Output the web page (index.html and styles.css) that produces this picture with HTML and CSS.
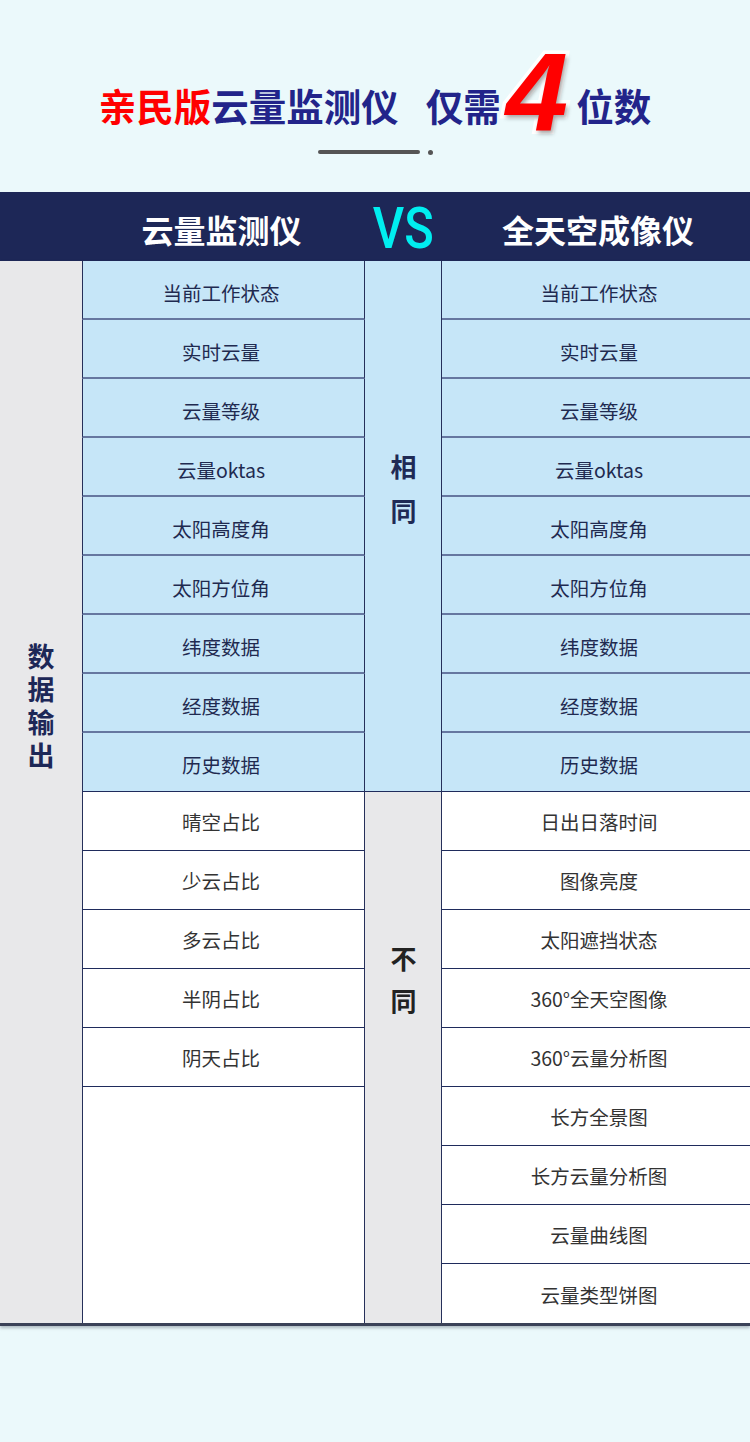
FILE: index.html
```html
<!DOCTYPE html>
<html lang="zh-CN">
<head>
<meta charset="utf-8">
<title>云量监测仪 VS 全天空成像仪</title>
<link rel="stylesheet" href="styles.css">
</head>
<body>
<div class="page">
  <div class="title">
    <span class="red">亲民版</span><span class="navy">云量监测仪</span><span class="navy gap">仅需</span><span class="four">4</span><span class="navy">位数</span>
  </div>
  <div class="sep"><span class="bar"></span><span class="dot"></span></div>

  <div class="head">
    <div></div>
    <div class="h-name">云量监测仪</div>
    <div class="vs"><span>VS</span></div>
    <div class="h-name">全天空成像仪</div>
  </div>

  <div class="table">
    <div class="side"><span class="vtext">数据输出</span></div>

    <div class="c2 blue">当前工作状态</div>
    <div class="c2 blue">实时云量</div>
    <div class="c2 blue">云量等级</div>
    <div class="c2 blue">云量oktas</div>
    <div class="c2 blue">太阳高度角</div>
    <div class="c2 blue">太阳方位角</div>
    <div class="c2 blue">纬度数据</div>
    <div class="c2 blue">经度数据</div>
    <div class="c2 blue last">历史数据</div>
    <div class="c2 white">晴空占比</div>
    <div class="c2 white">少云占比</div>
    <div class="c2 white">多云占比</div>
    <div class="c2 white">半阴占比</div>
    <div class="c2 white">阴天占比</div>
    <div class="c2 white empty"></div>

    <div class="c3 same"><span class="vtext">相同</span></div>
    <div class="c3 diff"><span class="vtext">不同</span></div>

    <div class="c4 blue">当前工作状态</div>
    <div class="c4 blue">实时云量</div>
    <div class="c4 blue">云量等级</div>
    <div class="c4 blue">云量oktas</div>
    <div class="c4 blue">太阳高度角</div>
    <div class="c4 blue">太阳方位角</div>
    <div class="c4 blue">纬度数据</div>
    <div class="c4 blue">经度数据</div>
    <div class="c4 blue last">历史数据</div>
    <div class="c4 white">日出日落时间</div>
    <div class="c4 white">图像亮度</div>
    <div class="c4 white">太阳遮挡状态</div>
    <div class="c4 white">360°全天空图像</div>
    <div class="c4 white">360°云量分析图</div>
    <div class="c4 white">长方全景图</div>
    <div class="c4 white">长方云量分析图</div>
    <div class="c4 white">云量曲线图</div>
    <div class="c4 white">云量类型饼图</div>
  </div>
</div>
</body>
</html>
```

FILE: styles.css
```css
html, body {
  margin: 0;
  padding: 0;
}
body {
  background: #ebf9fb;
  font-family: "Noto Sans CJK SC", "Noto Sans", sans-serif;
  width: 750px;
  height: 1442px;
  overflow: hidden;
}
.page {
  width: 750px;
}

/* Title */
.title {
  margin-top: 65px;
  height: 80px;
  display: flex;
  align-items: center;
  justify-content: center;
  font-size: 37.5px;
  font-weight: 700;
  line-height: 1;
}
.red { color: #ff0000; }
.navy { color: #22248a; }
.gap { margin-left: 27px; }
.four {
  font-family: "Liberation Sans", Arial, sans-serif;
  font-style: italic;
  font-weight: 700;
  font-size: 112px;
  line-height: 1;
  color: #ff0000;
  -webkit-text-stroke: 7px #ffffff;
  paint-order: stroke fill;
  text-shadow: 2px 3px 4px rgba(0, 0, 0, 0.35);
  margin: 0 8px 24px 5px;
}

/* Separator */
.sep {
  margin-top: 5px;
  margin-bottom: 38px;
  height: 4px;
  display: flex;
  justify-content: center;
  align-items: center;
  gap: 8px;
}
.bar {
  width: 102px;
  height: 4px;
  border-radius: 2px;
  background: #555555;
}
.dot {
  width: 5px;
  height: 5px;
  border-radius: 50%;
  background: #555555;
}

/* Header band */
.head {
  height: 69px;
  background: #1d2757;
  display: grid;
  grid-template-columns: 82px 283px 77px 308px;
  align-items: center;
}
.h-name {
  color: #ffffff;
  font-size: 32px;
  font-weight: 700;
  text-align: center;
  padding-top: 4px;
}
.head .h-name:nth-child(2) { padding-right: 4px; }
.head .h-name:nth-child(4) { padding-left: 4px; }
.vs {
  text-align: center;
  padding-top: 3px;
}
.vs span {
  display: inline-block;
  font-family: "Roboto", "Liberation Sans", sans-serif;
  font-weight: 500;
  font-size: 58px;
  line-height: 1;
  color: #00eef0;
  transform: scaleX(0.84);
}

/* Table */
.table {
  display: grid;
  grid-template-columns: 82px 283px 77px 308px;
  grid-template-rows: repeat(18, 59px);
  grid-auto-flow: column;
  border-bottom: 3px solid #3b4258;
  box-shadow: 0 2px 3px rgba(60, 70, 90, 0.35);
}
.vtext {
  writing-mode: vertical-rl;
  text-orientation: upright;
  line-height: 1;
}
.side {
  grid-row: span 18;
  background: #e8e8ea;
  display: flex;
  flex-direction: column;
  align-items: center;
  padding-top: 382px;
  color: #1d2757;
  font-size: 27px;
  font-weight: 700;
}
.side .vtext { letter-spacing: 6px; }
.c2, .c4 {
  display: flex;
  align-items: center;
  justify-content: center;
  font-size: 19.5px;
  box-sizing: border-box;
}
.c2 {
  border-left: 1px solid #26305a;
  border-right: 1px solid #26305a;
  padding-right: 5px;
}
.c4 {
  padding-left: 6px;
}
.blue {
  background: #c6e6f8;
  color: #1f2a50;
  border-bottom: 2px solid #6677a0;
  padding-top: 6px;
}
.blue.last {
  border-bottom: 1px solid #1f2b5c;
  padding-top: 4px;
}
.white {
  background: #ffffff;
  color: #333333;
  border-bottom: 1px solid #1f2b5c;
  padding-top: 1px;
}
.empty {
  grid-row: span 4;
  border-bottom: none;
}
.c3 {
  grid-row: span 9;
  border-right: 1px solid #26305a;
  display: flex;
  flex-direction: column;
  align-items: center;
  font-size: 26px;
  font-weight: 700;
  box-sizing: border-box;
}
.same {
  background: #c6e6f8;
  color: #1f2a55;
  padding-top: 193px;
  border-bottom: 1px solid #1f2b5c;
}
.same .vtext { letter-spacing: 18px; }
.diff {
  background: #e8e8ea;
  color: #222222;
  padding-top: 154px;
}
.diff .vtext { letter-spacing: 16px; }
.c4.white:last-child {
  border-bottom: none;
}
```
